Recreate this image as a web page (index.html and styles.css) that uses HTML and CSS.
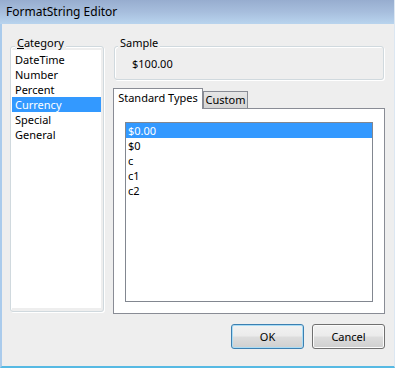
FILE: index.html
```html
<!DOCTYPE html>
<html lang="en">
<head>
  <meta charset="UTF-8">
  <title>FormatString Editor</title>
  <link rel="stylesheet" href="styles.css">
</head>
<body>
  <div class="window">
    <div class="titlebar">FormatString Editor</div>

    <div class="main">
      <div class="group category">
        <div class="group-title"><u>C</u>ategory</div>
        <ul class="list category-list">
          <li>DateTime</li>
          <li>Number</li>
          <li>Percent</li>
          <li class="selected">Currency</li>
          <li>Special</li>
          <li>General</li>
        </ul>
      </div>

      <div class="right">
        <div class="group sample">
          <div class="group-title">Sample</div>
          <div class="sample-value">$100.00</div>
        </div>

        <div class="tabs">
          <div class="tab-strip">
            <div class="tab active">Standard Types</div>
            <div class="tab">Custom</div>
          </div>
          <div class="tab-panel">
            <ul class="list types-list">
              <li class="selected">$0.00</li>
              <li>$0</li>
              <li>c</li>
              <li>c1</li>
              <li>c2</li>
            </ul>
          </div>
        </div>
      </div>
    </div>

    <div class="buttons">
      <button class="btn default">OK</button>
      <button class="btn">Cancel</button>
    </div>
  </div>
</body>
</html>
```

FILE: styles.css
```css
body {
  margin: 0;
  font-family: "Noto Sans", sans-serif;
  font-size: 11px;
  color: #000;
}
.window {
  width: 395px;
  height: 368px;
  box-sizing: border-box;
  background-color: #eeeeee;
  border-left: 2px solid #aacbec;
  border-right: 1px solid #dce7f2;
  border-bottom: 2px solid #56b9e3;
  display: flex;
  flex-direction: column;
}
.titlebar {
  height: 24px;
  margin-left: -2px;
  padding-left: 6px;
  line-height: 24px;
  font-size: 12px;
  background: linear-gradient(#97adcf, #a7bedd 50%, #b9d4ee);
}
.main {
  display: flex;
  gap: 9px;
  padding: 22px 9px 0 8px;
}
.group {
  border: 1px solid #d0d9de;
  border-radius: 3px;
  box-shadow: inset 1px 1px #fff, 1px 1px #fff;
}
.group-title {
  width: fit-content;
  margin: -12px 0 0 3px;
  padding: 0 2px;
  line-height: 15px;
  background-color: #eeeeee;
}
.category {
  width: 94px;
  box-sizing: border-box;
  margin-bottom: 2px;
  padding: 0 2px 3px 1px;
  display: flex;
  flex-direction: column;
}
.list {
  list-style: none;
  margin: 0;
  padding: 0;
  background-color: #fff;
}
.list li {
  line-height: 15px;
  white-space: nowrap;
}
.list li.selected {
  background-color: #3399ff;
  color: #fff;
}
.category-list {
  flex: 1;
  padding-top: 2px;
}
.category-list li {
  padding-left: 3px;
}
.right {
  flex: 1;
  display: flex;
  flex-direction: column;
}
.sample {
  margin: 0 1px;
  height: 32px;
}
.sample-value {
  margin-top: 6px;
  padding-left: 17px;
  line-height: 15px;
}
.tabs {
  margin-top: 8px;
}
.tab-strip {
  display: flex;
  align-items: flex-end;
}
.tab {
  box-sizing: border-box;
  border: 1px solid #898c95;
  border-bottom: none;
  line-height: 15px;
  text-align: center;
}
.tab.active {
  width: 90px;
  padding: 1px 0 4px;
  margin-bottom: -1px;
  background-color: #fff;
  position: relative;
}
.tab:not(.active) {
  width: 45px;
  padding: 0 0 1px;
  background: linear-gradient(#e6e6e6, #d5d5d5);
}
.tab-panel {
  height: 206px;
  box-sizing: border-box;
  border: 1px solid #898c95;
  background-color: #fff;
  padding: 13px 11px 11px;
}
.types-list {
  height: 100%;
  box-sizing: border-box;
  border: 1px solid #828790;
}
.types-list li {
  padding-left: 2px;
}
.buttons {
  display: flex;
  justify-content: flex-end;
  gap: 8px;
  margin-top: 10px;
  padding-right: 9px;
}
.btn {
  width: 73px;
  height: 25px;
  font-family: "Noto Sans", sans-serif;
  font-size: 11px;
  color: #000;
  border: 1px solid #707070;
  border-radius: 3px;
  background: linear-gradient(#f2f2f2, #ebebeb 48%, #dddddd 52%, #cfcfcf);
  box-shadow: inset 0 0 0 1px #fbfbfb;
}
.btn.default {
  border-color: #3c7fb1;
  box-shadow: inset 0 0 0 1px #a9dcf5;
}
```
